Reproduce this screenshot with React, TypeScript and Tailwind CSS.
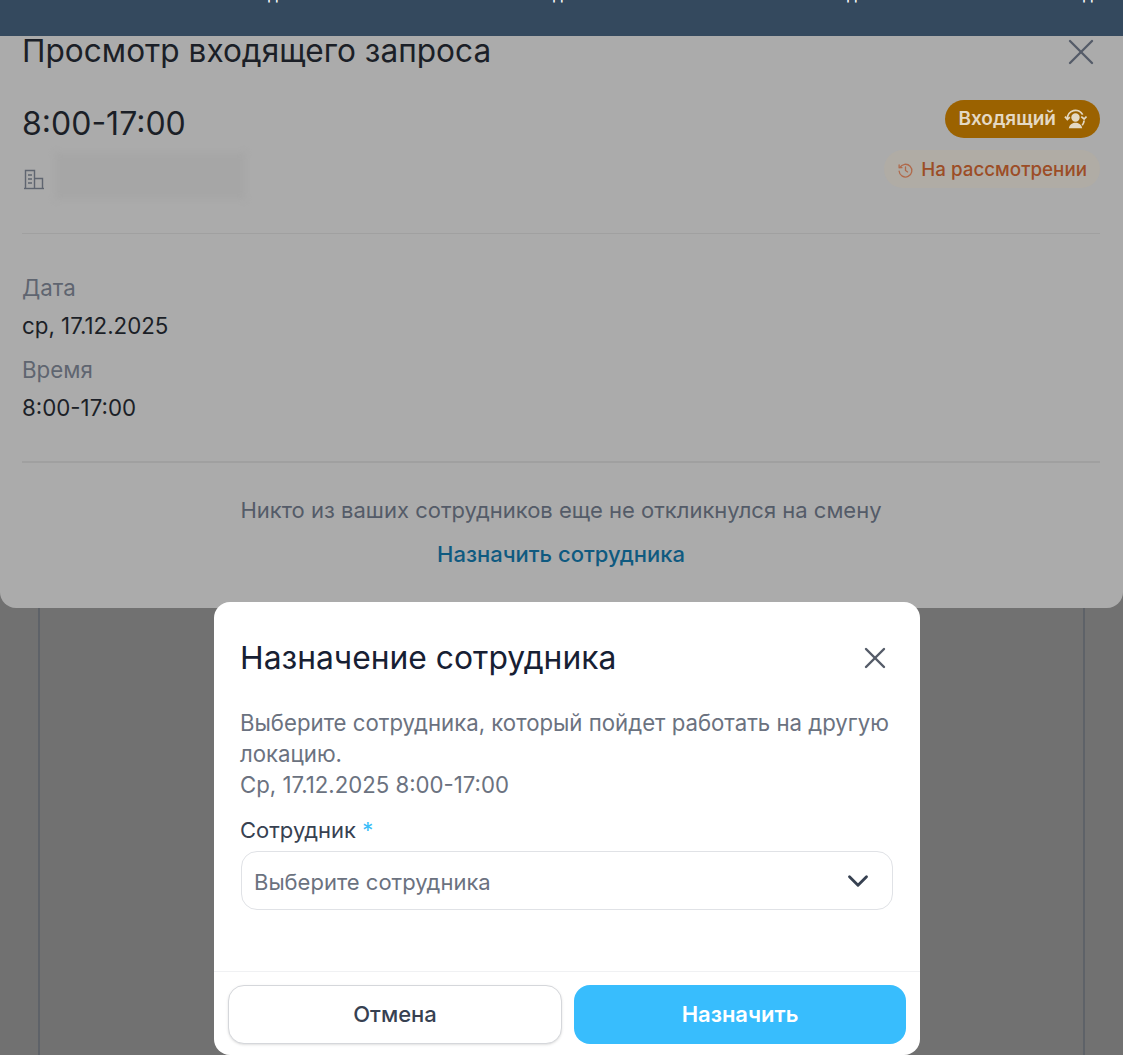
import { ChevronDown, X } from 'lucide-react';

function BuildingIcon() {
    return (
        <svg className="mt-[5px]" width="24" height="24" viewBox="0 0 24 24" fill="none" stroke="#5f6570" strokeWidth="1.4">
            <path d="M2 21.5h20" />
            <path d="M3.5 21.5V3.5h9v18" />
            <path d="M12.5 11.5h8v10" />
            <path d="M6 8h4M6 12h4M6 16h4" />
        </svg>
    );
}

function IncomingIcon() {
    return (
        <svg width="23" height="23" viewBox="0 0 24 24" fill="none" stroke="#e4d9c4" strokeWidth="1.8">
            <circle cx="12" cy="10" r="3.5" fill="#e4d9c4" />
            <path d="M5 21c1-4 4-5.5 7-5.5s6 1.5 7 5.5z" fill="#e4d9c4" stroke="none" />
            <path d="M3.5 11a8.5 8.5 0 0 1 16-4" />
            <path d="M21 13a9 9 0 0 1-2 5" />
            <path d="M1 9l2.5 3 2.5-2.5M18 9l3 2.5 2.5-2.5" />
        </svg>
    );
}

function ClockIcon() {
    return (
        <svg width="17" height="17" viewBox="0 0 24 24" fill="none" stroke="#b0694a" strokeWidth="1.8" strokeLinecap="round">
            <path d="M4 8a9 9 0 1 1-1 5" />
            <path d="M12 7v5l3 2" />
            <path d="M3 4v4h4" />
        </svg>
    );
}

export default function App() {
    return (
        <div className="relative flex h-[1055px] w-[1123px] flex-col overflow-hidden bg-[#717171] font-['Inter','Noto_Sans',sans-serif]">
            {/* Top bar, text is cut off by the screen edge */}
            <div className="h-9 shrink-0 overflow-hidden bg-[#34495e]">
                <div className="-mt-[15px] flex pl-[268px] text-base leading-[18px] text-white">
                    <span className="w-[285px]">д</span>
                    <span className="w-[294px]">д</span>
                    <span className="w-[236px]">д</span>
                    <span>д</span>
                </div>
            </div>

            {/* Request panel */}
            <div className="relative flex h-[572px] shrink-0 flex-col rounded-b-2xl bg-[#ababab] pr-[23px] pl-[22px]">
                <div className="flex h-[31px] items-center justify-between">
                    <h1 className="-mt-[2px] text-[31.6px] leading-8 font-normal text-[#1b1f27]">Просмотр входящего запроса</h1>
                    <X className="mr-[-3px] text-[#545b68]" size={44} strokeWidth={1.3} />
                </div>

                <div className="mt-[18px] flex h-[149px] justify-between border-b border-[#a0a0a0]">
                    <div>
                        <div className="mt-[21px] text-[32px] leading-9 text-[#1b1f27]">8:00-17:00</div>
                        <div className="mt-[11px] flex items-center gap-[9px]">
                            <BuildingIcon />
                            <div className="h-[46px] w-[190px] bg-[#a6a6a6] blur-[3px]" />
                        </div>
                    </div>
                    <div className="flex flex-col items-end gap-[12px] pt-[15px]">
                        <span className="flex h-[38px] items-center gap-2 rounded-full bg-[#9b6200] px-[13px] text-[19px] font-semibold text-[#e4d9c4]">
                            Входящий <IncomingIcon />
                        </span>
                        <span className="flex h-[38px] items-center gap-[7px] rounded-full bg-[#b0aca5] px-[13px] pt-[2px] text-[18.8px] font-medium text-[#9c4d26]">
                            <ClockIcon /> На рассмотрении
                        </span>
                    </div>
                </div>

                <div className="flex h-[229px] flex-col border-b-2 border-[#a0a0a0] pt-[39px] text-[22.3px] leading-[30px]">
                    <div className="text-[#5f6570]">Дата</div>
                    <div className="mt-2 text-[#1b1f27]">ср, 17.12.2025</div>
                    <div className="mt-[14px] text-[#5f6570]">Время</div>
                    <div className="mt-2 text-[#1b1f27]">8:00-17:00</div>
                </div>

                <div className="mt-[32px] text-center text-[22px] leading-[30px] text-[#545b68]">
                    Никто из ваших сотрудников еще не откликнулся на смену
                </div>
                <div className="mt-[14px] text-center text-[22px] leading-[30px] font-medium text-[#0f5a80]">
                    Назначить сотрудника
                </div>
            </div>

            {/* Page behind the panel */}
            <div className="mx-[38px] flex-1 border-x-2 border-[#5e6268]" />

            {/* Assign dialog */}
            <div className="absolute top-[602px] left-[214px] flex h-[453px] w-[706px] flex-col rounded-2xl bg-white">
                <div className="flex items-center justify-between pt-[38px] pr-[27px] pl-[26px]">
                    <h2 className="text-[31.8px] leading-9 font-normal text-[#172033]">Назначение сотрудника</h2>
                    <X className="text-[#545b68]" size={36} strokeWidth={1.6} />
                </div>
                <p className="mt-[31px] pr-[20px] pl-[26px] text-[22.2px] leading-[31px] text-[#6b7280]">
                    Выберите сотрудника, который пойдет работать на другую локацию.
                    <br />
                    Ср, 17.12.2025 8:00-17:00
                </p>
                <label className="mt-[15px] px-[26px] text-[22px] leading-[31px] text-[#374151]">
                    Сотрудник <span className="text-[#38bdf8]">*</span>
                </label>
                <div className="mx-[27px] mt-[5px] flex h-[59px] items-center justify-between rounded-2xl border border-[#e0e2e6] pr-[17px] pl-[12px] text-[22px] text-[#6b7280]">
                    <span className="pt-1">Выберите сотрудника</span>
                    <ChevronDown className="text-[#374151]" size={34} strokeWidth={2} />
                </div>
                <div className="mt-auto flex h-[84px] gap-3 border-t border-[#f0f1f3] px-[14px] pt-[13px]">
                    <button className="h-[59px] flex-1 rounded-2xl border border-[#d5d7db] bg-white text-[22px] font-medium text-[#374151] shadow-sm">
                        Отмена
                    </button>
                    <button className="h-[59px] flex-1 rounded-2xl bg-[#38bdfd] text-[22px] font-semibold text-white">
                        Назначить
                    </button>
                </div>
            </div>
        </div>
    );
}
